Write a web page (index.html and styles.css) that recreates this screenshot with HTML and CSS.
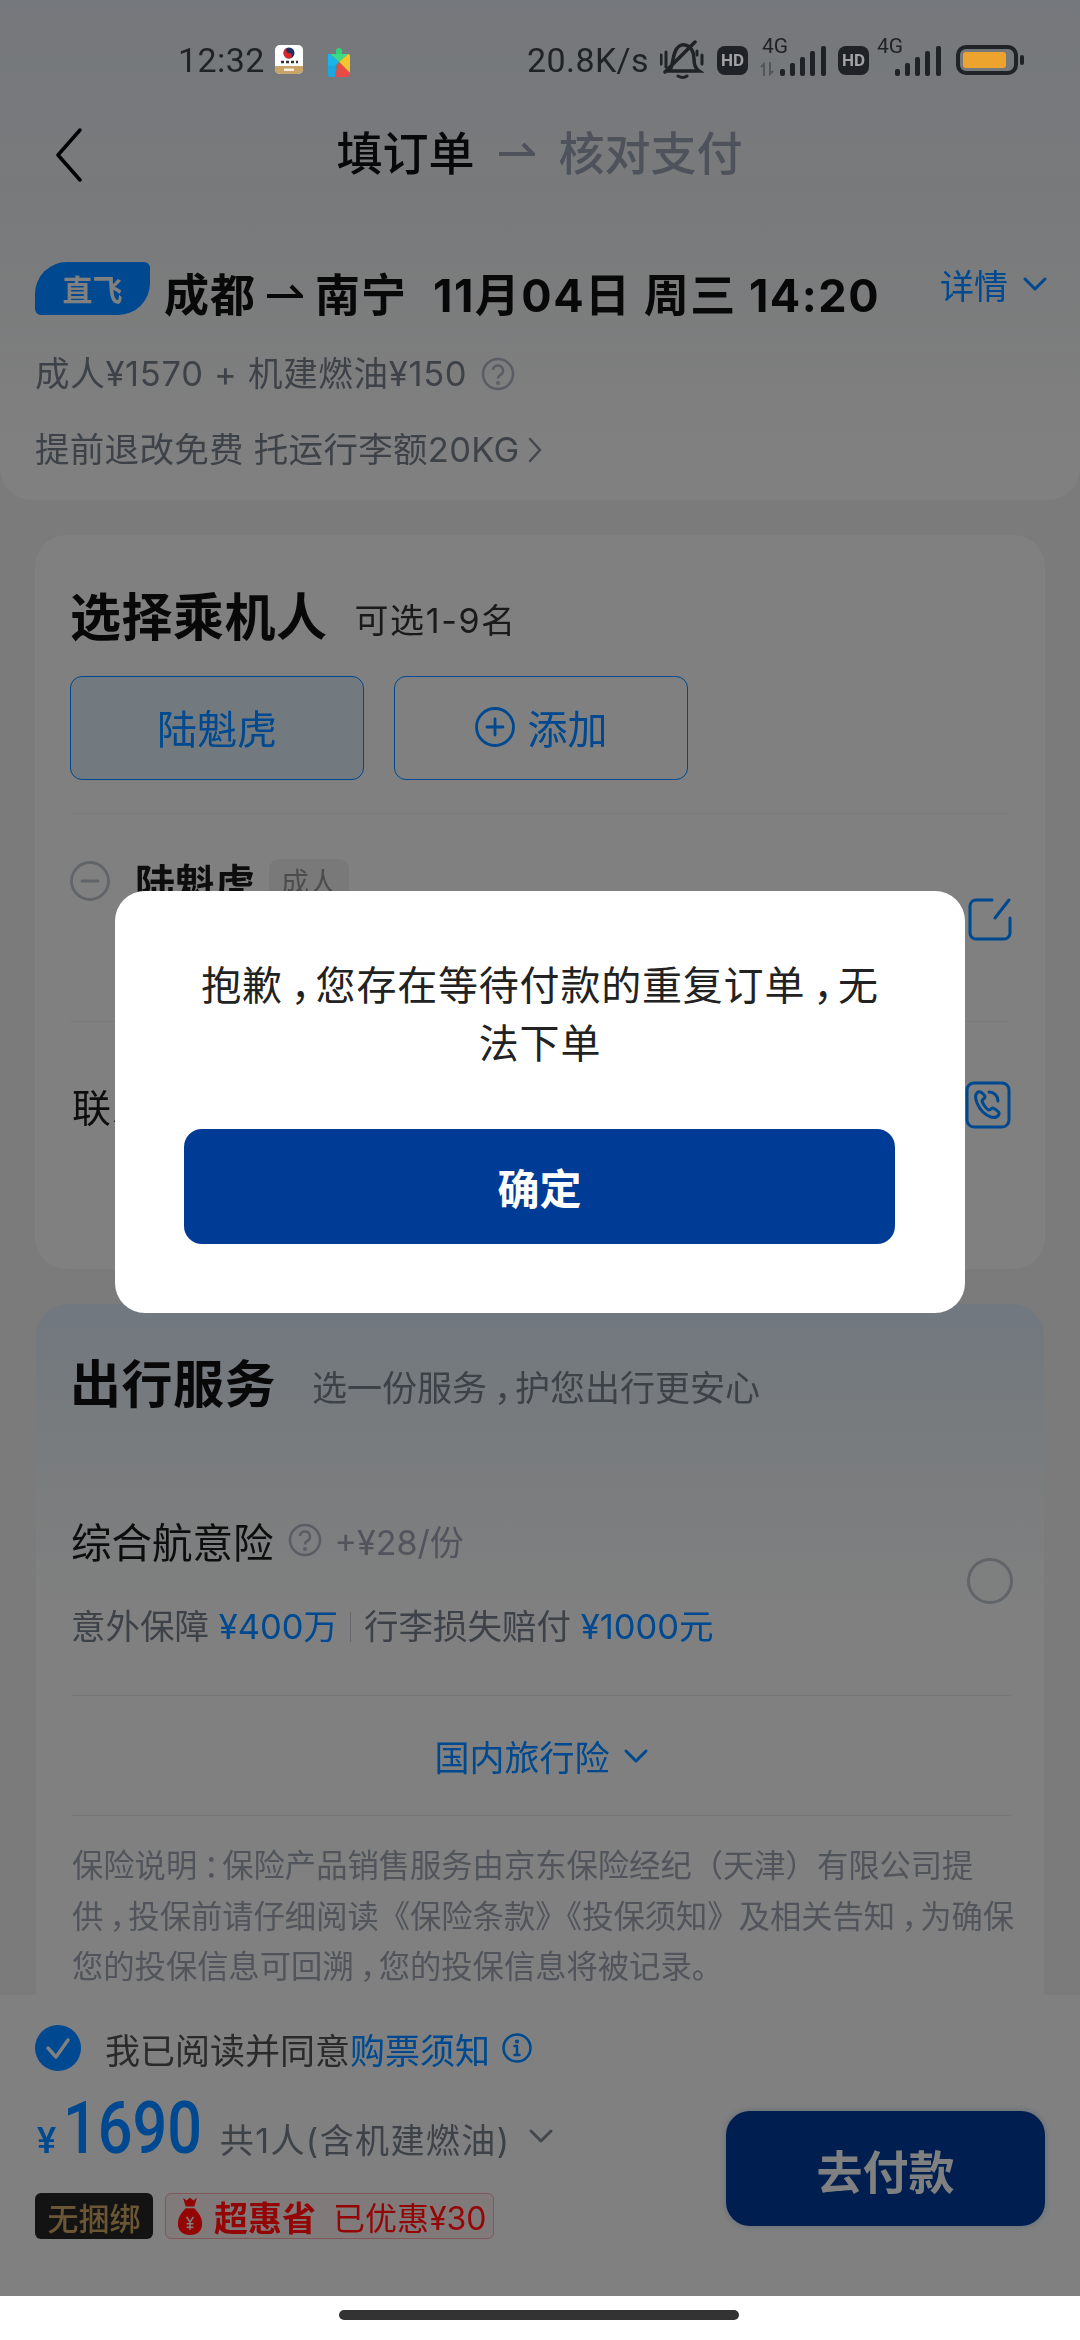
FILE: index.html
```html
<!DOCTYPE html>
<html lang="zh">
<head>
<meta charset="utf-8">
<title>填订单</title>
<link rel="stylesheet" href="styles.css">
</head>
<body>
<div class="page">
  <main class="main">
    <section class="head-card">
      <div class="status">
        <span class="time">12:32</span>
        <svg class="app-ico" viewBox="0 0 28 29"><rect width="28" height="29" rx="5" fill="#fff"/><path d="M0 21h28v3a5 5 0 0 1-5 5H5a5 5 0 0 1-5-5z" fill="#c9a468"/><circle cx="14" cy="8" r="5.500" fill="#1d2f5f"/><path d="M14 2.500a5.500 5.500 0 0 1 0 11a2.700 2.700 0 0 0 0-5.500a2.700 2.700 0 0 1 0-5.500z" transform="rotate(180 14 8)" fill="#d8262c"/><path d="M6 17h3M11 17h3M16 17h3M21 17h2" stroke="#333" stroke-width="2.500"/><rect x="9" y="23.500" width="10" height="2.500" fill="#fff" opacity=".8"/></svg>
        <svg class="play-ico" viewBox="0 0 22 32"><path d="M8 6a3 3 0 0 1 6 0v3H8z" fill="#2fd27a"/><path d="M2 9h18l-9 8z" fill="#3ddc84"/><path d="M0 9l2 0 9 8-4 4-7 0z" fill="#19b5e8"/><path d="M0 21h7l1 2-1 9H2a2 2 0 0 1-2-2z" fill="#1aa7e0"/><path d="M20 9a2 2 0 0 1 2 2v17l-11-11z" fill="#f6c52c"/><path d="M11 17l11 11-2 4H7z" fill="#ea4a45"/></svg>
        <span class="speed">20.8K/s</span>
        <svg class="bell" viewBox="0 0 44 40" fill="none" stroke="#1f2226" stroke-width="3.500" stroke-linecap="round"><path d="M9 31c4-3 3-12 6-19 2-5 6-8 10-7 6 1 9 7 9 14 0 6 2 10 5 12z"/><path d="M18 36q5 3 9 0" stroke-width="3"/><path d="M35 2L5 32"/><path d="M1 15v9M6 12v15M37 11v4M42 15v9" stroke-width="3"/></svg>
        <span class="hd hd-a">HD</span>
        <span class="net net-a"><i class="g4">4G</i>
          <svg class="arrows" viewBox="0 0 14 14" fill="none" stroke="#53565a" stroke-width="2"><path d="M4 14V2L1 5M10 0v12l3-3"/></svg>
          <svg class="sig" viewBox="0 0 46 30" fill="#1f2226"><rect x="0" y="23" width="5" height="7" rx="2"/><rect x="10" y="17" width="5" height="13" rx="2"/><rect x="20" y="11" width="5" height="19" rx="2"/><rect x="30" y="5" width="5" height="25" rx="2"/><rect x="41" y="0" width="5" height="30" rx="2"/></svg>
        </span>
        <span class="hd hd-b">HD</span>
        <span class="net net-b"><i class="g4">4G</i>
          <svg class="sig" viewBox="0 0 46 30" fill="#1f2226"><rect x="0" y="23" width="5" height="7" rx="2"/><rect x="10" y="17" width="5" height="13" rx="2"/><rect x="20" y="11" width="5" height="19" rx="2"/><rect x="30" y="5" width="5" height="25" rx="2"/><rect x="41" y="0" width="5" height="30" rx="2"/></svg>
        </span>
        <svg class="batt" viewBox="0 0 68 30"><rect x="2" y="2" width="58" height="26" rx="8" fill="none" stroke="#1f2226" stroke-width="4"/><rect x="7" y="7" width="43" height="16" rx="3" fill="#eda42e"/><rect x="64" y="10" width="4" height="10" rx="2" fill="#1f2226"/></svg>
      </div>
      <nav class="nav">
        <svg class="back" viewBox="0 0 28 54" fill="none" stroke="#000" stroke-width="3.500" stroke-linecap="round" stroke-linejoin="round"><path d="M25 2L3 27l22 25"/></svg>
        <div class="steps">
          <span class="step-on">填订单</span>
          <svg class="harp-light" viewBox="0 0 36 16" fill="none" stroke="#9ca3b0" stroke-width="4"><path d="M0 12h34L24 2"/></svg>
          <span class="step-off">核对支付</span>
        </div>
      </nav>
      <div class="flight">
        <span class="direct">直飞</span>
        <span class="route">成都</span>
        <svg class="harp-dark" viewBox="0 0 36 16" fill="none" stroke="#111" stroke-width="4"><path d="M0 12h34L24 2"/></svg>
        <span class="route">南宁</span>
        <span class="route route-when">11月04日 周三 14:20</span>
        <span class="detail">详情
          <svg class="chev-s" viewBox="0 0 26 16" fill="none" stroke="#1a8af0" stroke-width="3" stroke-linecap="round" stroke-linejoin="round"><path d="M3 3l10 10L23 3"/></svg>
        </span>
      </div>
      <div class="fare">成人¥1570 + 机建燃油¥150
        <svg class="q-ico" viewBox="0 0 34 34" fill="none" stroke="#b4b9c2" stroke-width="2.500"><circle cx="17" cy="17" r="15"/><path d="M12 13a5 5 0 1 1 7 5c-1.500 1-2 2-2 3.500"/><circle cx="17" cy="26" r=".8"/></svg>
      </div>
      <div class="rules">提前退改免费 托运行李额20KG
        <svg class="chev-r" viewBox="0 0 14 26" fill="none" stroke="#8a9099" stroke-width="2.500" stroke-linecap="round" stroke-linejoin="round"><path d="M2 2l10 11L2 24"/></svg>
      </div>
    </section>

    <section class="card">
      <div class="card-title">
        <h2 class="h2">选择乘机人</h2>
        <span class="sub-dark">可选1-9名</span>
      </div>
      <div class="pick-row">
        <button class="pick pick-on">陆魁虎</button>
        <button class="pick">
          <svg class="plus" viewBox="0 0 40 40" fill="none" stroke="#1a8af0" stroke-width="2.800" stroke-linecap="round"><circle cx="20" cy="20" r="18.500"/><path d="M20 12v16M12 20h16"/></svg>
          添加
        </button>
      </div>
      <div class="pax">
        <div class="pax-left">
          <svg class="minus" viewBox="0 0 40 40" fill="none" stroke="#c4c8ce" stroke-width="2.800" stroke-linecap="round"><circle cx="20" cy="20" r="18.500"/><path d="M12 20h16"/></svg>
          <span class="pax-name">陆魁虎</span>
          <span class="pax-tag">成人</span>
        </div>
        <svg class="edit" viewBox="0 0 44 44" fill="none" stroke="#1a8af0" stroke-width="3" stroke-linecap="round" stroke-linejoin="round"><path d="M24 3H8a6 6 0 0 0-6 6v27a6 6 0 0 0 6 6h28a6 6 0 0 0 6-6V21"/><path d="M41 3L27 21"/></svg>
      </div>
      <div class="contact">
        <span class="contact-label">联系手机</span>
        <svg class="phone" viewBox="0 0 46 48" fill="none" stroke="#1a8af0" stroke-width="3" stroke-linecap="round" stroke-linejoin="round"><rect x="2" y="2" width="42" height="44" rx="7"/><path d="M13 11c-3 2-3 6-1 11 3 7 8 12 14 14 4 1 7 0 8-3 1-2-4-5-6-6-2 0-2 2-4 2-3-1-6-6-7-9 0-2 3-2 3-4 0-2-4-6-7-5z"/><path d="M24 11c5 0 9 4 9 9"/></svg>
      </div>
    </section>

    <section class="card card-tint">
      <div class="card-title">
        <h2 class="h2">出行服务</h2>
        <span class="sub-gray">选一份服务<span class="cm">，</span>护您出行更安心</span>
      </div>
      <div class="ins">
        <div class="ins-text">
          <div class="ins-name">
            <span class="ins-label">综合航意险</span>
            <svg class="q-ico" viewBox="0 0 34 34" fill="none" stroke="#b4b9c2" stroke-width="2.500"><circle cx="17" cy="17" r="15"/><path d="M12 13a5 5 0 1 1 7 5c-1.500 1-2 2-2 3.500"/><circle cx="17" cy="26" r=".8"/></svg>
            <span class="ins-price">+¥28/份</span>
          </div>
          <div class="ins-cover">意外保障 <b class="blue">¥400万</b><i class="vsep"></i>行李损失赔付 <b class="blue">¥1000元</b></div>
        </div>
        <span class="radio"></span>
      </div>
      <div class="more">国内旅行险
        <svg class="chev-m" viewBox="0 0 26 16" fill="none" stroke="#1a8af0" stroke-width="3" stroke-linecap="round" stroke-linejoin="round"><path d="M3 3l10 10L23 3"/></svg>
      </div>
      <p class="note">保险说明<span class="cm">：</span>保险产品销售服务由京东保险经纪（天津）有限公司提<br>供<span class="cm">，</span>投保前请仔细阅读《保险条款》《投保须知》及相关告知<span class="cm">，</span>为确保<br>您的投保信息可回溯<span class="cm">，</span>您的投保信息将被记录。</p>
    </section>
  </main>

  <footer class="bar">
    <div class="agree">
      <svg class="check" viewBox="0 0 46 46"><circle cx="23" cy="23" r="23" fill="#1a8af0"/><path d="M13 23l8 9 12-17" fill="none" stroke="#fff" stroke-width="3.500" stroke-linecap="round" stroke-linejoin="round"/></svg>
      <span class="agree-text">我已阅读并同意<span class="blue">购票须知</span></span>
      <svg class="info" viewBox="0 0 30 30" fill="none" stroke="#1a8af0" stroke-width="2.500" stroke-linecap="round"><circle cx="15" cy="15" r="13.500"/><path d="M15 13v9M12.500 13H15M12.500 22h5"/><circle cx="15" cy="8.500" r=".8"/></svg>
    </div>
    <div class="bar-body">
      <div class="bar-left">
        <div class="price-row">
          <span class="yen">¥</span><span class="price">1690</span>
          <span class="price-note">共1人(含机建燃油)</span>
          <svg class="chev-p" viewBox="0 0 26 16" fill="none" stroke="#8a9099" stroke-width="3" stroke-linecap="round" stroke-linejoin="round"><path d="M3 3l10 10L23 3"/></svg>
        </div>
        <div class="tags">
          <span class="tag-dark">无捆绑</span>
          <span class="tag-red">
            <svg class="bag" viewBox="0 0 28 44"><path d="M6 1l4 3 4-3 4 3 4-3-3 10H9z" fill="#e81c1c"/><path d="M9 13h10c5 5 9 11 9 18 0 9-6 13-14 13S0 40 0 31c0-7 4-13 9-18z" fill="#e81c1c"/><path d="M10 23l4 6 4-6M14 29v9M10 31h8M10 35h8" fill="none" stroke="#fff" stroke-width="1.800"/></svg>
            <b class="tag-strong">超惠省</b>
            <span class="tag-save">已优惠¥30</span>
          </span>
        </div>
      </div>
      <button class="pay">去付款</button>
    </div>
  </footer>

  <div class="gesture"><span class="gesture-pill"></span></div>

  <div class="scrim">
    <div class="modal">
      <p class="modal-text">抱歉<span class="cm">，</span>您存在等待付款的重复订单<span class="cm">，</span>无<br>法下单</p>
      <button class="ok">确定</button>
    </div>
  </div>
</div>
</body>
</html>
```
FILE: styles.css
```css
* { box-sizing: border-box; }
html, body { margin: 0; padding: 0; }
body { font-family: Inter, "Noto Sans CJK SC", sans-serif; color: #1a1a1a; }
button { font-family: inherit; border: 0; padding: 0; }
p, h2 { margin: 0; }
i { font-style: normal; }
b { font-weight: 500; }
svg { display: block; flex: none; }

.page { position: relative; width: 1080px; height: 2340px; overflow: hidden; display: flex; flex-direction: column; background: #fff; }
.main { flex: 1; min-height: 0; overflow: hidden; background: #f6f6f6; }

.head-card { height: 500px; background: linear-gradient(#ecf0f5 0, #f3f4f6 220px, #fff 440px); border-radius: 0 0 32px 32px; padding: 0 35px; }

.status { position: relative; z-index: 2; height: 120px; display: flex; align-items: center; margin: 0 -35px; padding: 0 0 0 178px; color: #1f2226; font-family: Roboto, sans-serif; font-size: 34px; }
.time { width: 97px; letter-spacing: .4px; }
.app-ico { width: 28px; height: 29px; margin-right: 25px; margin-top: -1px; }
.play-ico { width: 22px; height: 32px; margin-right: 177px; margin-top: 2px; }
.speed { width: 133px; letter-spacing: .4px; }
.bell { width: 44px; height: 40px; margin-right: 13px; }
.hd { width: 31px; height: 29px; background: #1f2226; color: #a0a2a5; border-radius: 8px; font-size: 17px; font-weight: 700; display: flex; align-items: center; justify-content: center; }
.hd-a { margin-right: 12px; }
.hd-b { margin-right: 6px; }
.net { position: relative; width: 66px; height: 30px; display: block; margin-top: 1px; }
.net-a { margin-right: 12px; }
.net-b { margin-right: 15px; }
.g4 { position: absolute; left: 2px; top: -11px; font-size: 21px; line-height: 22px; color: #1f2226; }
.arrows { position: absolute; left: 0; bottom: 0; width: 14px; height: 14px; }
.sig { position: absolute; right: 0; bottom: 0; width: 46px; height: 30px; }
.batt { width: 68px; height: 30px; }

.nav { position: relative; height: 70px; display: flex; align-items: center; justify-content: center; padding-bottom: 10px; }
.back { position: absolute; left: 20px; top: 8px; width: 28px; height: 54px; }
.steps { display: flex; align-items: center; margin-left: -1px; font-size: 46px; font-weight: 500; }
.step-on { color: #111; }
.step-off { color: #9ca3b0; }
.harp-light { width: 36px; height: 16px; margin: 0 24px; }

.flight { display: flex; align-items: center; height: 56px; margin-top: 70px; }
.direct { width: 115px; height: 53px; border-radius: 32px 6px 32px 6px; background: #1a8af0; color: #fff; font-size: 30px; font-weight: 700; display: flex; align-items: center; justify-content: center; }
.route { font-size: 45px; font-weight: 700; color: #111; margin-top: 16px; line-height: 56px; letter-spacing: 1px; }
.direct + .route { margin-left: 14px; }
.harp-dark { width: 36px; height: 16px; margin: 8px 12px 0 11px; }
.route-when { margin-left: 26px; letter-spacing: 1.500px; }
.detail { margin-left: auto; margin-right: -3px; font-size: 34px; color: #1a8af0; display: flex; align-items: center; gap: 14px; margin-top: -8px; }
.chev-s { width: 26px; height: 16px; }

.fare, .rules { display: flex; align-items: center; gap: 14px; font-size: 34.500px; line-height: 50px; color: #7d838c; }
.fare { margin-top: 33px; letter-spacing: .7px; }
.rules { margin-top: 26px; gap: 8px; letter-spacing: .3px; }
.q-ico { width: 34px; height: 34px; }
.chev-r { width: 14px; height: 26px; }

.card { background: #fff; border-radius: 32px; margin: 35px 35px 0; padding: 53px 35px 0; height: 734px; }
.card-title { display: flex; align-items: center; height: 60px; gap: 28px; }
.h2 { font-size: 51px; font-weight: 700; color: #111; line-height: 60px; letter-spacing: .5px; }
.sub-dark { font-size: 34px; color: #333; letter-spacing: 1.600px; margin-left: -1px; }
.sub-gray { font-size: 35px; color: #7d838c; }
.cm { font-family: "Noto Sans CJK SC", sans-serif; font-feature-settings: "halt"; margin: 0 .1em 0 .2em; }

.pick-row { display: flex; gap: 30px; margin-top: 28px; padding-bottom: 33px; border-bottom: 1px solid #f6f6f6; }
.pick { width: 294px; height: 104px; border: 1.500px solid #1a8af0; border-radius: 12px; background: #fff; color: #1a8af0; font-size: 40px; padding-bottom: 2px; display: flex; align-items: center; justify-content: center; gap: 13px; }
.pick-on { background: #e8f3fb; }
.plus { width: 40px; height: 40px; }

.pax { height: 208px; display: flex; justify-content: space-between; border-bottom: 1px solid #f3f3f3; padding-top: 47px; }
.pax-left { display: flex; align-items: center; height: 40px; }
.minus { width: 40px; height: 40px; }
.pax-name { font-size: 40px; font-weight: 700; margin-left: 25px; }
.pax-tag { width: 80px; height: 44px; margin-left: 14px; border-radius: 10px; background: #f2f2f2; color: #999; font-size: 28px; display: flex; align-items: center; justify-content: center; }
.edit { width: 44px; height: 44px; margin: 36px -2px 0 0; }
.contact { display: flex; justify-content: space-between; align-items: center; height: 166px; }
.contact-label { font-size: 39px; color: #1a1a1a; margin-left: 2px; }
.phone { width: 46px; height: 48px; margin-right: -1px; }

.card-tint { height: 800px; background: linear-gradient(#e6eff9 0, #f6f9fb 180px, #fff 300px); }
.card-tint { margin-left: 36px; margin-right: 36px; padding: 51px 33px 0 36px; }
.card-tint .card-title { gap: 36px; }
.card-tint .h2 { margin-left: -2px; }

.ins { display: flex; align-items: center; justify-content: space-between; margin-top: 100px; padding-bottom: 43px; border-bottom: 1px solid #eee; }
.ins-name { display: flex; align-items: center; height: 50px; }
.ins-label { font-size: 40.500px; color: #1a1a1a; margin-left: -1px; }
.ins-name .q-ico { margin-left: 14px; }
.ins-price { margin-left: 13px; font-size: 34px; color: #a3a8b4; }
.ins-cover { margin-top: 37px; margin-left: -1px; font-size: 34.500px; line-height: 50px; color: #7d838c; display: flex; align-items: center; white-space: pre; }
.blue { color: #1a8af0; }
.ins-cover .blue { font-weight: 400; }
.vsep { width: 1px; height: 30px; background: #c9cdd3; margin: 0 13px 0 12px; }
.radio { width: 46px; height: 46px; border-radius: 50%; border: 3px solid #c4c8ce; margin: -6px -2px 0 0; }

.more { height: 120px; display: flex; align-items: center; justify-content: center; gap: 13px; font-size: 35px; color: #1a8af0; border-bottom: 1px solid #eee; }
.chev-m { width: 26px; height: 16px; }
.note { margin-top: 24px; font-size: 31.300px; line-height: 48.500px; color: #a3a8b0; white-space: nowrap; }

.bar { height: 301px; background: #fff; padding: 30px 35px 0; flex: none; }
.agree { display: flex; align-items: center; height: 46px; }
.check { width: 46px; height: 46px; }
.agree-text { margin-left: 24px; font-size: 35px; color: #555; }
.info { width: 30px; height: 30px; margin-left: 12px; }
.bar-body { display: flex; justify-content: space-between; align-items: flex-start; margin-top: 20px; }
.price-row { display: flex; align-items: baseline; height: 76px; }
.yen { font-family: Roboto, sans-serif; font-size: 36px; font-weight: 500; color: #1a8af0; margin-left: 2px; }
.price { font-family: Roboto, sans-serif; font-size: 72px; font-weight: 500; color: #1a8af0; margin: 0 -24px 0 7px; line-height: 76px; transform: scaleX(.85); transform-origin: left center; }
.price-note { font-size: 34px; color: #7d838c; margin-left: 17px; letter-spacing: 1.400px; }
.chev-p { width: 26px; height: 16px; margin-left: 18px; align-self: center; margin-top: 14px; }
.tags { display: flex; gap: 12px; margin-top: 26px; }
.tag-dark { width: 118px; height: 46px; border-radius: 6px; background: #262626; color: #c9ad7c; font-size: 31px; font-weight: 500; display: flex; align-items: center; justify-content: center; }
.tag-red { width: 329px; height: 46px; border: 1px solid #f0b4b4; border-radius: 6px; display: flex; align-items: center; padding-left: 10px; background: #fff4f4; }
.bag { width: 28px; height: 38px; }
.tag-strong { margin-left: 10px; font-size: 34px; font-weight: 700; color: #e81c1c; }
.tag-save { margin-left: 17px; font-size: 32px; color: #e81c1c; }
.pay { width: 319px; height: 115px; border-radius: 24px; background: #003a80; color: #fff; font-size: 46px; font-weight: 700; margin-top: 20px; box-shadow: 0 0 5px 2px #dfe6f2; }

.gesture { height: 44px; flex: none; background: #fff; padding-top: 14px; display: flex; justify-content: center; }
.gesture-pill { width: 400px; height: 10px; border-radius: 5px; background: #333; margin-left: -3px; }

.scrim { position: absolute; left: 0; top: 0; right: 0; bottom: 44px; backdrop-filter: brightness(.5) saturate(1.4); display: flex; justify-content: center; padding-top: 891px; }
.modal { width: 850px; height: 422px; background: #fff; border-radius: 30px; padding: 63px 60px 0; }
.modal-text { font-size: 40px; line-height: 58px; text-align: center; color: #222; letter-spacing: .8px; }
.ok { display: block; width: 711px; height: 115px; margin: 56px 0 0 9px; border-radius: 18px; background: #003c96; color: #fff; font-size: 42px; font-weight: 700; }
```
